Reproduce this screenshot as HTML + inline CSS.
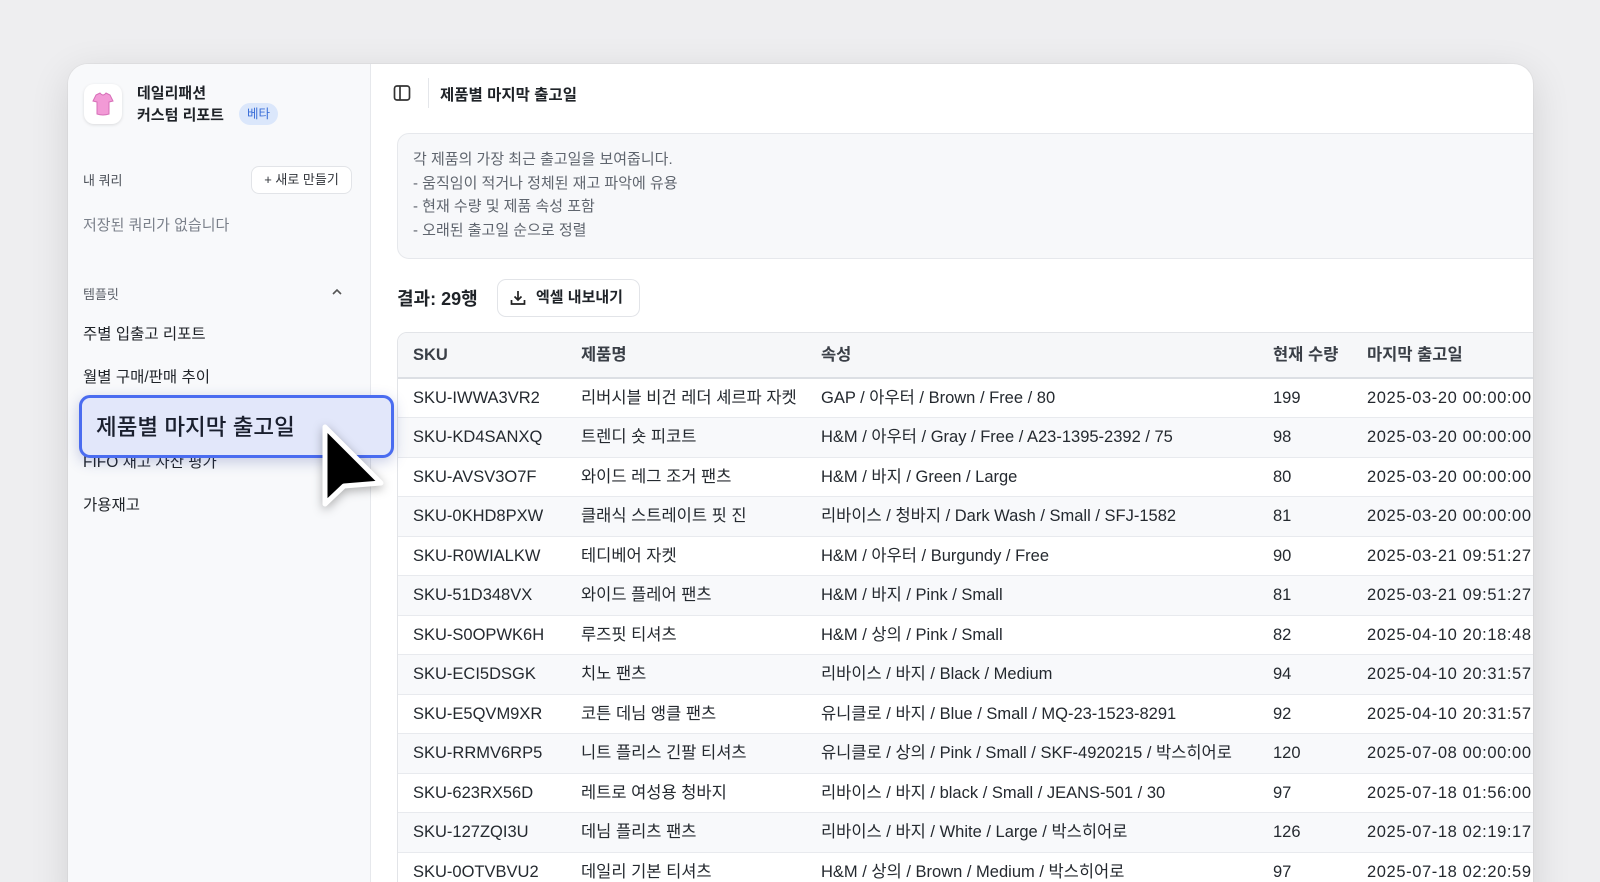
<!DOCTYPE html>
<html style="overflow:hidden;width:1600px;height:882px"><head><meta charset="utf-8"><style>
*{box-sizing:border-box;margin:0;padding:0}
body{width:1600px;height:882px;overflow:hidden;background:#eeeef0;font-family:"Liberation Sans","Noto Sans CJK KR",sans-serif;color:#1f2328;position:relative}
.win{position:absolute;left:68px;top:64px;width:1465px;height:850px;background:#fff;border-radius:20px;overflow:hidden;box-shadow:0 10px 40px rgba(0,0,0,.12),0 0 0 1px rgba(0,0,0,.03)}
.side{position:absolute;left:0;top:0;width:303px;height:100%;background:#f8f9fb;border-right:1px solid #e6e8ec}
.abs{position:absolute;white-space:nowrap}
.main{position:absolute;left:303px;top:0;right:0;bottom:0}
table{border-collapse:collapse;font-size:16.5px;color:#24292f;line-height:20px}
td,th{height:39.5px;text-align:left;padding:0 0 0 15px;white-space:nowrap;border-bottom:1px solid #e8eaee;vertical-align:middle}
td:nth-child(5){letter-spacing:0.6px}
th{height:45px;font-weight:600;color:#3a3f47;background:#f6f7f9;border-bottom:2px solid #dcdfe4}
tr:nth-child(odd) td{background:#f8f9fb}
</style></head><body>
<div class="win">
 <div class="side">
  <div class="abs" style="left:16px;top:20px;width:38px;height:40px;background:#fff;border-radius:10px;box-shadow:0 1px 3px rgba(0,0,0,.12)">
   <svg width="38" height="40" viewBox="0 0 38 40"><path d="M12 11 L16 9 Q19 13 22 9 L26 11 L29 17 L25 18 L25 30 Q19 32 13 30 L13 18 L9 17 Z" fill="#f29ad6" stroke="#d76fb8" stroke-width="1"/></svg>
  </div>
  <div class="abs" style="left:69px;top:18px;font-size:15px;font-weight:700">데일리패션</div>
  <div class="abs" style="left:69px;top:40px;font-size:15px;font-weight:700">커스텀 리포트</div>
  <div class="abs" style="left:171px;top:39px;width:39px;height:22px;border-radius:11px;background:#dbe7fb;color:#3b6fd8;font-size:12.5px;text-align:center;line-height:22px">베타</div>
  <div class="abs" style="left:15px;top:106px;font-size:13px;color:#4b5058">내 쿼리</div>
  <div class="abs" style="left:183px;top:102px;width:101px;height:28px;border-radius:8px;background:#fff;border:1px solid #e2e4e8;font-size:13px;text-align:center;line-height:26px;color:#30343a">+ 새로 만들기</div>
  <div class="abs" style="left:15px;top:150px;font-size:15px;color:#7b818b">저장된 쿼리가 없습니다</div>
  <div class="abs" style="left:15px;top:220px;font-size:13px;color:#5b6068">템플릿</div>
  <svg class="abs" style="left:262px;top:221px" width="14" height="14" viewBox="0 0 14 14"><path d="M3 9 L7 5 L11 9" fill="none" stroke="#555" stroke-width="1.6"/></svg>
  <div class="abs" style="left:15px;top:258px;font-size:15.5px;color:#1f2328">주별 입출고 리포트</div>
  <div class="abs" style="left:15px;top:301px;font-size:15.5px;color:#1f2328">월별 구매/판매 추이</div>
  <div class="abs" style="left:15px;top:386px;font-size:15.5px;color:#1f2328">FIFO 재고 자산 평가</div>
  <div class="abs" style="left:15px;top:429px;font-size:15.5px;color:#1f2328">가용재고</div>
 </div>
 <div class="main">
  <svg class="abs" style="left:22px;top:20px" width="18" height="18" viewBox="0 0 18 18"><rect x="1.5" y="2" width="15" height="14" rx="2.5" fill="none" stroke="#333" stroke-width="1.7"/><line x1="7" y1="2" x2="7" y2="16" stroke="#333" stroke-width="1.7"/></svg>
  <div class="abs" style="left:57px;top:14px;width:1px;height:30px;background:#e4e6ea"></div>
  <div class="abs" style="left:69px;top:19px;font-size:15.5px;font-weight:700">제품별 마지막 출고일</div>
  <div class="abs" style="left:26px;top:69px;width:1200px;height:126px;background:#f7f8fa;border:1px solid #e6e8ec;border-radius:12px"></div>
  <div class="abs" style="left:42px;top:84px;font-size:15px;color:#5f656e;line-height:23.7px">각 제품의 가장 최근 출고일을 보여줍니다.<br>- 움직임이 적거나 정체된 재고 파악에 유용<br>- 현재 수량 및 제품 속성 포함<br>- 오래된 출고일 순으로 정렬</div>
  <div class="abs" style="left:26px;top:221px;font-size:18px;font-weight:700">결과: 29행</div>
  <div class="abs" style="left:126px;top:215px;width:143px;height:38px;border:1px solid #e2e4e8;border-radius:9px;background:#fff;font-size:15px;line-height:36px;padding-left:38px;font-weight:600">엑셀 내보내기</div>
  <svg class="abs" style="left:138px;top:225px" width="18" height="18" viewBox="0 0 18 18"><path d="M9 2 V11 M5.5 7.5 L9 11 L12.5 7.5 M2.5 11 V15 H15.5 V11" fill="none" stroke="#222" stroke-width="1.7"/></svg>
  <div class="abs" style="left:26px;top:268px;width:1200px;border:1px solid #e2e4e8;border-radius:10px 0 0 0;overflow:hidden">
  <table style="width:1200px">
   <tr><th style="width:168px">SKU</th><th style="width:240px">제품명</th><th style="width:452px">속성</th><th style="width:94px">현재 수량</th><th>마지막 출고일</th></tr>
   <tr><td>SKU-IWWA3VR2</td><td>리버시블 비건 레더 셰르파 자켓</td><td>GAP / 아우터 / Brown / Free / 80</td><td>199</td><td>2025-03-20 00:00:00</td></tr>
   <tr><td>SKU-KD4SANXQ</td><td>트렌디 숏 피코트</td><td>H&amp;M / 아우터 / Gray / Free / A23-1395-2392 / 75</td><td>98</td><td>2025-03-20 00:00:00</td></tr>
   <tr><td>SKU-AVSV3O7F</td><td>와이드 레그 조거 팬츠</td><td>H&amp;M / 바지 / Green / Large</td><td>80</td><td>2025-03-20 00:00:00</td></tr>
   <tr><td>SKU-0KHD8PXW</td><td>클래식 스트레이트 핏 진</td><td>리바이스 / 청바지 / Dark Wash / Small / SFJ-1582</td><td>81</td><td>2025-03-20 00:00:00</td></tr>
   <tr><td>SKU-R0WIALKW</td><td>테디베어 자켓</td><td>H&amp;M / 아우터 / Burgundy / Free</td><td>90</td><td>2025-03-21 09:51:27</td></tr>
   <tr><td>SKU-51D348VX</td><td>와이드 플레어 팬츠</td><td>H&amp;M / 바지 / Pink / Small</td><td>81</td><td>2025-03-21 09:51:27</td></tr>
   <tr><td>SKU-S0OPWK6H</td><td>루즈핏 티셔츠</td><td>H&amp;M / 상의 / Pink / Small</td><td>82</td><td>2025-04-10 20:18:48</td></tr>
   <tr><td>SKU-ECI5DSGK</td><td>치노 팬츠</td><td>리바이스 / 바지 / Black / Medium</td><td>94</td><td>2025-04-10 20:31:57</td></tr>
   <tr><td>SKU-E5QVM9XR</td><td>코튼 데님 앵클 팬츠</td><td>유니클로 / 바지 / Blue / Small / MQ-23-1523-8291</td><td>92</td><td>2025-04-10 20:31:57</td></tr>
   <tr><td>SKU-RRMV6RP5</td><td>니트 플리스 긴팔 티셔츠</td><td>유니클로 / 상의 / Pink / Small / SKF-4920215 / 박스히어로</td><td>120</td><td>2025-07-08 00:00:00</td></tr>
   <tr><td>SKU-623RX56D</td><td>레트로 여성용 청바지</td><td>리바이스 / 바지 / black / Small / JEANS-501 / 30</td><td>97</td><td>2025-07-18 01:56:00</td></tr>
   <tr><td>SKU-127ZQI3U</td><td>데님 플리츠 팬츠</td><td>리바이스 / 바지 / White / Large / 박스히어로</td><td>126</td><td>2025-07-18 02:19:17</td></tr>
   <tr><td>SKU-0OTVBVU2</td><td>데일리 기본 티셔츠</td><td>H&amp;M / 상의 / Brown / Medium / 박스히어로</td><td>97</td><td>2025-07-18 02:20:59</td></tr>
  </table>
  </div>
 </div>
</div>
<div class="abs" style="left:79px;top:395px;width:315px;height:63px;border:3.5px solid #4a6cf0;border-radius:11px;background:#e2e7fa;box-shadow:0 4px 14px rgba(40,60,150,.25)"></div>
<div class="abs" style="left:96px;top:410px;font-size:22.5px;font-weight:500;color:#1a1f2e">제품별 마지막 출고일</div>
<svg class="abs" style="left:315px;top:420px;filter:drop-shadow(0 3px 5px rgba(0,0,0,.3))" width="80" height="95" viewBox="0 0 80 95"><path d="M10 7 L10 84 L29 66 L66 63 Z" fill="#000" stroke="#fff" stroke-width="5" stroke-linejoin="round"/></svg>
</body></html>
